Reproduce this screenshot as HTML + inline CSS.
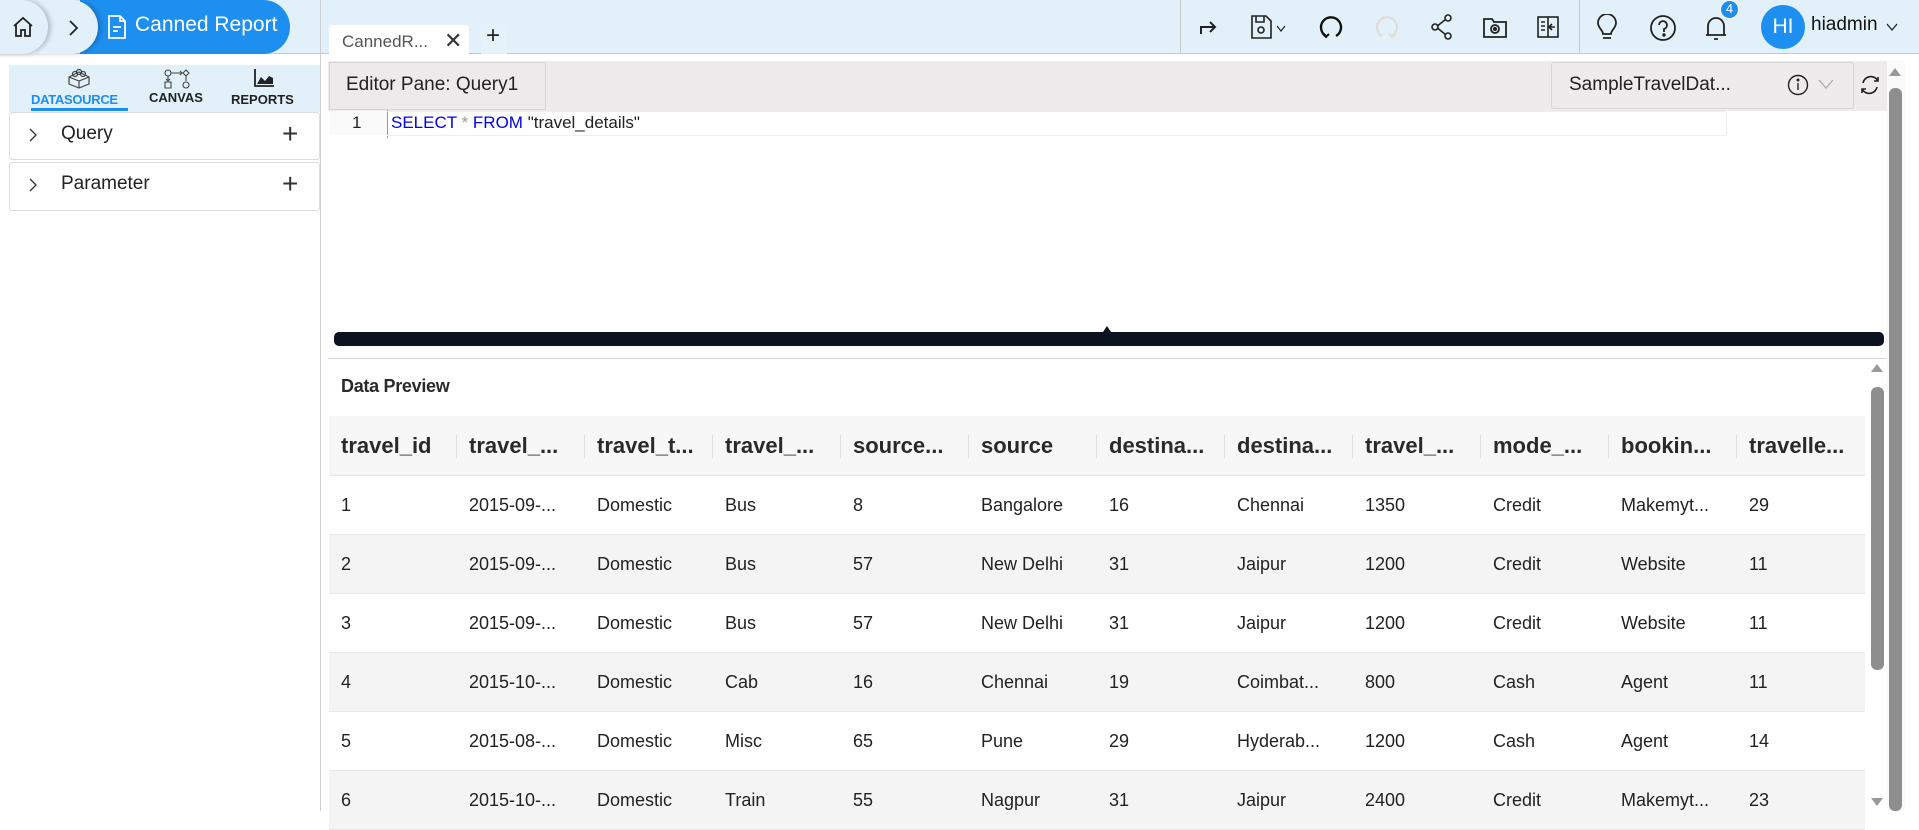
<!DOCTYPE html>
<html><head><meta charset="utf-8"><style>
*{box-sizing:border-box;margin:0;padding:0}
body{width:1919px;height:811px;overflow:hidden;background:#fff;font-family:"Liberation Sans",sans-serif;color:#222;position:relative}
.abs{position:absolute}
.top{left:0;top:0;width:1919px;height:54px;background:#e1f0f9;border-bottom:1px solid #c8c8c8}
.ic{position:absolute;top:14px}
svg{display:block}
.hd{position:absolute;top:416px;height:60px;background:#f7f7f7;width:1536px;left:329px;border-bottom:1px solid #e4e4e4}
.row{position:absolute;left:329px;width:1536px;height:59px;border-bottom:1px solid #e8e8e8}
.c{position:absolute;top:0;height:100%;display:flex;align-items:center;padding-left:12px;font-size:18px;color:#222;white-space:nowrap}
.hd .c{font-size:22px;font-weight:bold;color:#2a2a2a}
.sep{position:absolute;top:18px;width:1px;height:24px;background:#e2e2e2}
</style></head><body>
<div class="abs top"></div>
<!-- breadcrumbs -->
<div class="abs" style="left:80px;top:0;width:210px;height:54px;background:#1c8ff0;border-radius:0 27px 27px 0"></div>
<div class="abs" style="left:-10px;top:0;width:108px;height:54px;background:#e1f0f9;border-radius:0 27px 27px 0;box-shadow:3px 0 5px rgba(0,0,0,.2)"></div>
<div class="abs" style="left:-10px;top:0;width:58px;height:54px;background:#e1f0f9;border-radius:0 27px 27px 0;box-shadow:3px 0 5px rgba(0,0,0,.2)"></div>
<svg class="abs" style="left:11px;top:15px" width="24" height="24" viewBox="0 0 24 24" fill="none" stroke="#222" stroke-width="1.8"><path d="M3 11L12 3l9 8M5 9v12h5v-6h4v6h5V9"/></svg>
<svg class="abs" style="left:67px;top:19px" width="12" height="18" viewBox="0 0 12 18" fill="none" stroke="#222" stroke-width="1.8"><path d="M3 2l7 7-7 7"/></svg>
<svg class="abs" style="left:107px;top:14px" width="20" height="26" viewBox="0 0 20 26" fill="none" stroke="#fff" stroke-width="1.8"><path d="M2 2h11l5 5v17H2zM13 2v5h5M6 13h8M6 17h5"/></svg>
<div class="abs" style="left:135px;top:13px;color:#fff;font-size:21px">Canned Report</div>
<div class="abs" style="left:320px;top:0;width:1px;height:811px;background:#d0d0d0"></div>
<!-- tab -->
<div class="abs" style="left:329px;top:25px;width:140px;height:29px;background:#fff;border-radius:3px 3px 0 0"></div>
<div class="abs" style="left:342px;top:32px;font-size:17px;color:#555">CannedR...</div>
<div class="abs" style="left:444px;top:28px;font-size:22px;color:#333">✕</div>
<div class="abs" style="left:481px;top:25px;width:26px;height:29px;background:#e6f2f9"></div>
<div class="abs" style="left:486px;top:22px;font-size:24px;color:#222">+</div>
<!-- right icons -->
<div class="abs" style="left:1180px;top:0;width:1px;height:54px;background:#c8c8c8"></div>
<div class="abs" style="left:1579px;top:0;width:1px;height:54px;background:#c8c8c8"></div>
<svg class="ic" style="left:1197px" width="24" height="26" viewBox="0 0 24 26" fill="none" stroke="#222" stroke-width="2"><path d="M4 20v-7h14M13 8l5 5-5 5"/></svg>
<svg class="ic" style="left:1250px" width="42" height="26" viewBox="0 0 42 26" fill="none" stroke="#222" stroke-width="1.6"><path d="M2 2h14l5 5v17H2zM6 2v6h8V2"/><circle cx="11" cy="16" r="3"/><path d="M27 12l4 5 4-5" stroke-width="1.2"/></svg>
<svg class="ic" style="left:1318px" width="26" height="26" viewBox="0 0 26 26" fill="none" stroke="#111" stroke-width="2.4"><path d="M8 22A10 10 0 1 1 18 22"/><path d="M5 20l3 3 3-3" stroke-width="2"/></svg>
<svg class="ic" style="left:1374px" width="26" height="26" viewBox="0 0 26 26" fill="none" stroke="#ddd" stroke-width="2.4"><path d="M8 22A10 10 0 1 1 18 22"/><path d="M15 20l3 3 3-3" stroke-width="2"/></svg>
<svg class="ic" style="left:1430px" width="24" height="26" viewBox="0 0 24 26" fill="none" stroke="#222" stroke-width="1.6"><circle cx="18" cy="4" r="3"/><circle cx="5" cy="13" r="3"/><circle cx="18" cy="22" r="3"/><path d="M8 11.5l7.5-6M8 14.5l7.5 6"/></svg>
<svg class="ic" style="left:1482px" width="26" height="26" viewBox="0 0 26 26" fill="none" stroke="#222" stroke-width="1.8"><path d="M2 5h8l2 3h12v15H2z"/><circle cx="13" cy="15" r="4"/><circle cx="13" cy="15" r="1.2" fill="#222"/></svg>
<svg class="ic" style="left:1536px" width="24" height="26" viewBox="0 0 24 26" fill="none" stroke="#222" stroke-width="1.6"><rect x="2" y="3" width="20" height="20"/><path d="M12 3v20M5 8h4M5 12h4M5 16h4M19 13h-5M16 10l-3 3 3 3"/></svg>
<svg class="ic" style="left:1595px" width="24" height="28" viewBox="0 0 24 28" fill="none" stroke="#222" stroke-width="1.8"><path d="M8 20c0-4-5-6-5-11a9 9 0 0 1 18 0c0 5-5 7-5 11zM8 24h8"/></svg>
<svg class="ic" style="left:1649px" width="28" height="28" viewBox="0 0 28 28" fill="none" stroke="#222" stroke-width="1.8"><circle cx="14" cy="14" r="12"/><path d="M10 11a4 4 0 1 1 5 4v3"/><circle cx="15" cy="21" r=".8" fill="#222"/></svg>
<svg class="ic" style="left:1704px" width="24" height="28" viewBox="0 0 24 28" fill="none" stroke="#222" stroke-width="1.8"><path d="M4 21V12a8 8 0 0 1 16 0v9H2h20M10 25h4"/></svg>
<div class="abs" style="left:1720px;top:0;width:19px;height:19px;border-radius:50%;background:#1c8ff0;border:1.5px solid #fff;color:#fff;font-size:13px;text-align:center;line-height:16px">4</div>
<div class="abs" style="left:1761px;top:5px;width:44px;height:44px;border-radius:50%;background:#1c8ff0;color:#fff;font-size:21px;text-align:center;line-height:44px">HI</div>
<div class="abs" style="left:1811px;top:14px;font-size:19px;color:#111">hiadmin</div>
<svg class="abs" style="left:1886px;top:22px" width="12" height="10" viewBox="0 0 12 10" fill="none" stroke="#222" stroke-width="1.3"><path d="M1 2l5 6 5-6"/></svg>
<!-- sidebar -->
<div class="abs" style="left:9px;top:65px;width:311px;height:47px;background:#e1f0f9"></div>
<svg class="abs" style="left:67px;top:69px" width="24" height="20" viewBox="0 0 24 20" fill="none" stroke="#444" stroke-width="1.2"><path d="M2 8l10-5 10 5v7l-10 4-10-4zM2 8l10 4 10-4M12 12v7"/><circle cx="8" cy="5" r="2.5"/><circle cx="16" cy="5" r="2.5"/><circle cx="12" cy="3" r="2.5"/></svg>
<div class="abs" style="left:31px;top:92px;font-size:13px;font-weight:bold;color:#1c8ff0;letter-spacing:-.3px">DATASOURCE</div>
<div class="abs" style="left:31px;top:108px;width:97px;height:3px;background:#1c8ff0"></div>
<svg class="abs" style="left:163px;top:69px" width="28" height="22" viewBox="0 0 28 22" fill="none" stroke="#444" stroke-width="1.1"><circle cx="5" cy="4" r="3"/><path d="M8 4h11M17 2l2 2-2 2"/><path d="M23 1l3 3-3 3-3-3z"/><path d="M5 7v5M3 10l2 2 2-2M23 7v5M2 13h6v6H2z"/><ellipse cx="23" cy="16" rx="3" ry="3"/></svg>
<div class="abs" style="left:149px;top:90px;font-size:13px;font-weight:bold;color:#222">CANVAS</div>
<svg class="abs" style="left:253px;top:68px" width="22" height="20" viewBox="0 0 22 20"><path d="M2 1v17h19" fill="none" stroke="#222" stroke-width="1.8"/><path d="M4 16l4-7 4 4 4-5 4 2v6z" fill="#222"/></svg>
<div class="abs" style="left:231px;top:92px;font-size:13px;font-weight:bold;color:#222">REPORTS</div>
<div class="abs" style="left:9px;top:112px;width:311px;height:48px;border:1px solid #ddd;border-radius:3px;background:#fff"></div>
<div class="abs" style="left:9px;top:162px;width:311px;height:49px;border:1px solid #ddd;border-radius:3px;background:#fff"></div>
<svg class="abs" style="left:28px;top:128px" width="10" height="14" viewBox="0 0 10 14" fill="none" stroke="#333" stroke-width="1.3"><path d="M2 1l6 6-6 6"/></svg>
<svg class="abs" style="left:28px;top:178px" width="10" height="14" viewBox="0 0 10 14" fill="none" stroke="#333" stroke-width="1.3"><path d="M2 1l6 6-6 6"/></svg>
<div class="abs" style="left:61px;top:123px;font-size:19px">Query</div>
<div class="abs" style="left:61px;top:173px;font-size:19px">Parameter</div>
<div class="abs" style="left:282px;top:118px;font-size:28px;font-weight:200;color:#333">+</div>
<div class="abs" style="left:282px;top:168px;font-size:28px;font-weight:200;color:#333">+</div>
<!-- editor -->
<div class="abs" style="left:328px;top:61px;width:1560px;height:50px;background:#edebeb"></div>
<div class="abs" style="left:329px;top:62px;width:217px;height:48px;border:1px solid #d6d6d6;background:#eceaea"></div>
<div class="abs" style="left:346px;top:74px;font-size:19px;color:#222">Editor Pane: Query1</div>
<div class="abs" style="left:1551px;top:62px;width:303px;height:47px;border:1px solid #d6d6d6;border-radius:3px;background:#edebeb"></div>
<div class="abs" style="left:1569px;top:74px;font-size:19px;color:#222">SampleTravelDat...</div>
<svg class="abs" style="left:1787px;top:74px" width="22" height="22" viewBox="0 0 22 22" fill="none" stroke="#222" stroke-width="1.4"><circle cx="11" cy="11" r="9.5"/><path d="M11 9v7"/><circle cx="11" cy="6" r=".8" fill="#222"/></svg>
<svg class="abs" style="left:1818px;top:78px" width="16" height="12" viewBox="0 0 16 12" fill="none" stroke="#aaa" stroke-width="1.3"><path d="M1 2l7 8 7-8"/></svg>
<svg class="abs" style="left:1859px;top:74px" width="22" height="22" viewBox="0 0 22 22" fill="none" stroke="#222" stroke-width="1.6"><path d="M4 9a8 8 0 0 1 15-2M18 13a8 8 0 0 1-15 2M19 3v4h-4M3 19v-4h4"/></svg>
<div class="abs" style="left:330px;top:111px;width:57px;height:24px;background:#fafafa"></div>
<div class="abs" style="left:352px;top:113px;font-size:17px">1</div>
<div class="abs" style="left:387px;top:110px;width:1px;height:28px;background:#999"></div>
<div class="abs" style="left:387px;top:111px;width:1340px;height:25px;border:1px solid #eee;border-left:none"></div>
<div class="abs" style="left:391px;top:113px;font-size:17px;white-space:pre"><span style="color:#0000ee">SELECT</span> <span style="color:#999">*</span> <span style="color:#0000ee">FROM</span> "travel_details"</div>
<!-- splitter -->
<div class="abs" style="left:334px;top:332px;width:1550px;height:14px;background:#0b1320;border-radius:5px"></div>
<div class="abs" style="left:1103px;top:326px;width:0;height:0;border-left:4px solid transparent;border-right:4px solid transparent;border-bottom:6px solid #0b1320"></div>
<div class="abs" style="left:328px;top:358px;width:1560px;height:1px;background:#d8d8d8"></div>
<div class="abs" style="left:341px;top:376px;font-size:18px;font-weight:bold;color:#2a2a2a;letter-spacing:-.3px">Data Preview</div>
<!-- outer scrollbar -->
<div class="abs" style="left:1887px;top:60px;width:18px;height:751px;background:#fafafa"></div>
<div class="abs" style="left:1889px;top:68px;width:0;height:0;border-left:6px solid transparent;border-right:6px solid transparent;border-bottom:8px solid #999"></div>
<div class="abs" style="left:1889px;top:88px;width:13px;height:723px;background:#8e8e8e;border-radius:6px"></div>
<!-- inner scrollbar -->
<div class="abs" style="left:1871px;top:364px;width:0;height:0;border-left:6px solid transparent;border-right:6px solid transparent;border-bottom:8px solid #999"></div>
<div class="abs" style="left:1871px;top:387px;width:13px;height:283px;background:#8e8e8e;border-radius:6px"></div>
<div class="abs" style="left:1871px;top:798px;width:0;height:0;border-left:6px solid transparent;border-right:6px solid transparent;border-top:8px solid #999"></div>
<!-- table -->
<div class="hd">
<div class="c" style="left:0">travel_id</div><div class="sep" style="left:127px"></div>
<div class="c" style="left:128px">travel_...</div><div class="sep" style="left:255px"></div>
<div class="c" style="left:256px">travel_t...</div><div class="sep" style="left:383px"></div>
<div class="c" style="left:384px">travel_...</div><div class="sep" style="left:511px"></div>
<div class="c" style="left:512px">source...</div><div class="sep" style="left:639px"></div>
<div class="c" style="left:640px">source</div><div class="sep" style="left:767px"></div>
<div class="c" style="left:768px">destina...</div><div class="sep" style="left:895px"></div>
<div class="c" style="left:896px">destina...</div><div class="sep" style="left:1023px"></div>
<div class="c" style="left:1024px">travel_...</div><div class="sep" style="left:1151px"></div>
<div class="c" style="left:1152px">mode_...</div><div class="sep" style="left:1279px"></div>
<div class="c" style="left:1280px">bookin...</div><div class="sep" style="left:1407px"></div>
<div class="c" style="left:1408px">travelle...</div>
</div>
<div class="row" style="top:476px;background:#fff"><div class="c" style="left:0">1</div><div class="c" style="left:128px">2015-09-...</div><div class="c" style="left:256px">Domestic</div><div class="c" style="left:384px">Bus</div><div class="c" style="left:512px">8</div><div class="c" style="left:640px">Bangalore</div><div class="c" style="left:768px">16</div><div class="c" style="left:896px">Chennai</div><div class="c" style="left:1024px">1350</div><div class="c" style="left:1152px">Credit</div><div class="c" style="left:1280px">Makemyt...</div><div class="c" style="left:1408px">29</div></div>
<div class="row" style="top:535px;background:#f4f4f4"><div class="c" style="left:0">2</div><div class="c" style="left:128px">2015-09-...</div><div class="c" style="left:256px">Domestic</div><div class="c" style="left:384px">Bus</div><div class="c" style="left:512px">57</div><div class="c" style="left:640px">New Delhi</div><div class="c" style="left:768px">31</div><div class="c" style="left:896px">Jaipur</div><div class="c" style="left:1024px">1200</div><div class="c" style="left:1152px">Credit</div><div class="c" style="left:1280px">Website</div><div class="c" style="left:1408px">11</div></div>
<div class="row" style="top:594px;background:#fff"><div class="c" style="left:0">3</div><div class="c" style="left:128px">2015-09-...</div><div class="c" style="left:256px">Domestic</div><div class="c" style="left:384px">Bus</div><div class="c" style="left:512px">57</div><div class="c" style="left:640px">New Delhi</div><div class="c" style="left:768px">31</div><div class="c" style="left:896px">Jaipur</div><div class="c" style="left:1024px">1200</div><div class="c" style="left:1152px">Credit</div><div class="c" style="left:1280px">Website</div><div class="c" style="left:1408px">11</div></div>
<div class="row" style="top:653px;background:#f4f4f4"><div class="c" style="left:0">4</div><div class="c" style="left:128px">2015-10-...</div><div class="c" style="left:256px">Domestic</div><div class="c" style="left:384px">Cab</div><div class="c" style="left:512px">16</div><div class="c" style="left:640px">Chennai</div><div class="c" style="left:768px">19</div><div class="c" style="left:896px">Coimbat...</div><div class="c" style="left:1024px">800</div><div class="c" style="left:1152px">Cash</div><div class="c" style="left:1280px">Agent</div><div class="c" style="left:1408px">11</div></div>
<div class="row" style="top:712px;background:#fff"><div class="c" style="left:0">5</div><div class="c" style="left:128px">2015-08-...</div><div class="c" style="left:256px">Domestic</div><div class="c" style="left:384px">Misc</div><div class="c" style="left:512px">65</div><div class="c" style="left:640px">Pune</div><div class="c" style="left:768px">29</div><div class="c" style="left:896px">Hyderab...</div><div class="c" style="left:1024px">1200</div><div class="c" style="left:1152px">Cash</div><div class="c" style="left:1280px">Agent</div><div class="c" style="left:1408px">14</div></div>
<div class="row" style="top:771px;background:#f4f4f4"><div class="c" style="left:0">6</div><div class="c" style="left:128px">2015-10-...</div><div class="c" style="left:256px">Domestic</div><div class="c" style="left:384px">Train</div><div class="c" style="left:512px">55</div><div class="c" style="left:640px">Nagpur</div><div class="c" style="left:768px">31</div><div class="c" style="left:896px">Jaipur</div><div class="c" style="left:1024px">2400</div><div class="c" style="left:1152px">Credit</div><div class="c" style="left:1280px">Makemyt...</div><div class="c" style="left:1408px">23</div></div>
</body></html>
